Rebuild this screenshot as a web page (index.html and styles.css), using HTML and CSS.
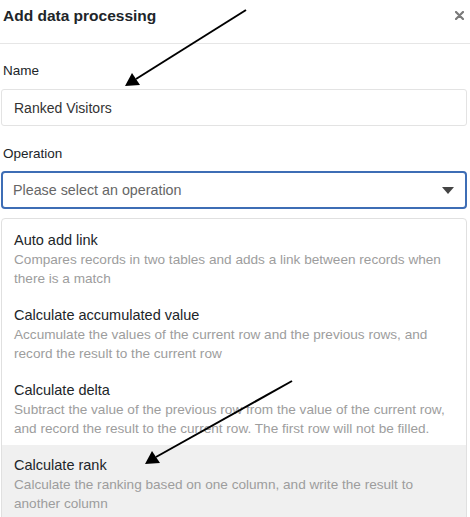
FILE: index.html
```html
<!DOCTYPE html>
<html>
<head>
<meta charset="utf-8">
<link rel="stylesheet" href="styles.css">
</head>
<body>
<div class="dialog">
  <div class="header">
    <span class="title">Add data processing</span>
    <svg class="close" width="9" height="9" viewBox="0 0 9 9"><path d="M1 1 L8 8 M8 1 L1 8" stroke="#7a7a7a" stroke-width="2.2" stroke-linecap="round"/></svg>
  </div>
  <div class="content">
    <div class="label">Name</div>
    <div class="input">Ranked Visitors</div>
    <div class="label label-op">Operation</div>
    <div class="select">
      <span class="placeholder">Please select an operation</span>
      <span class="caret"></span>
    </div>
    <div class="menu">
      <div class="item">
        <div class="item-title">Auto add link</div>
        <div class="item-desc">Compares records in two tables and adds a link between records when<br>there is a match</div>
      </div>
      <div class="item">
        <div class="item-title">Calculate accumulated value</div>
        <div class="item-desc">Accumulate the values of the current row and the previous rows, and<br>record the result to the current row</div>
      </div>
      <div class="item">
        <div class="item-title">Calculate delta</div>
        <div class="item-desc">Subtract the value of the previous row from the value of the current row,<br>and record the result to the current row. The first row will not be filled.</div>
      </div>
      <div class="item active">
        <div class="item-title">Calculate rank</div>
        <div class="item-desc">Calculate the ranking based on one column, and write the result to<br>another column</div>
      </div>
    </div>
  </div>
</div>
<svg class="arrows" width="470" height="517" viewBox="0 0 470 517">
  <line x1="246" y1="10" x2="136" y2="79" stroke="#000" stroke-width="2"/>
  <polygon points="125,86 132,73 140,85" fill="#000"/>
  <line x1="292" y1="381" x2="156" y2="457" stroke="#000" stroke-width="2"/>
  <polygon points="145,464 152,451 160,463" fill="#000"/>
</svg>
</body>
</html>
```
FILE: styles.css
```css
html, body {
  margin: 0;
  padding: 0;
  background: #fff;
  font-family: "Liberation Sans", Arial, sans-serif;
  color: #212529;
}
body {
  width: 470px;
  height: 517px;
  overflow: hidden;
  position: relative;
}
.header {
  box-sizing: border-box;
  height: 44px;
  border-bottom: 1px solid #e6e6e6;
  display: flex;
  align-items: center;
  justify-content: space-between;
  padding: 0 6px 11px 3px;
}
.title {
  font-size: 15.5px;
  font-weight: bold;
  color: #212529;
}
.close {
  display: block;
  margin-top: -1px;
}
.content {
  padding: 0 3px 0 1px;
}
.label {
  font-size: 13.5px;
  line-height: 20px;
  margin: 17px 0 8px 2px;
}
.label-op {
  margin-top: 18px;
  margin-bottom: 7px;
}
.input {
  height: 37px;
  box-sizing: border-box;
  border: 1px solid #e3e3e3;
  border-radius: 3px;
  padding: 0 12px;
  display: flex;
  align-items: center;
  font-size: 14px;
  color: #333;
}
.select {
  height: 38px;
  box-sizing: border-box;
  border: 2px solid #3e6db5;
  border-radius: 4px;
  padding: 0 10px;
  display: flex;
  align-items: center;
  justify-content: space-between;
  font-size: 14.3px;
}
.placeholder {
  color: #666;
}
.caret {
  width: 0;
  height: 0;
  border-left: 6px solid transparent;
  border-right: 6px solid transparent;
  border-top: 7px solid #444;
  margin-right: 1px;
}
.menu {
  margin-top: 9px;
  border: 1px solid #e0e0e0;
  border-radius: 4px;
  padding-top: 1px;
}
.item {
  padding: 11px 12px 7px 12px;
  line-height: 19px;
  white-space: nowrap;
}
.item.active {
  background: #f0f0f0;
}
.item-title {
  font-size: 14.5px;
  color: #212529;
}
.item-desc {
  font-size: 13.6px;
  color: #9d9d9d;
}
.arrows {
  position: absolute;
  left: 0;
  top: 0;
  pointer-events: none;
}
```
